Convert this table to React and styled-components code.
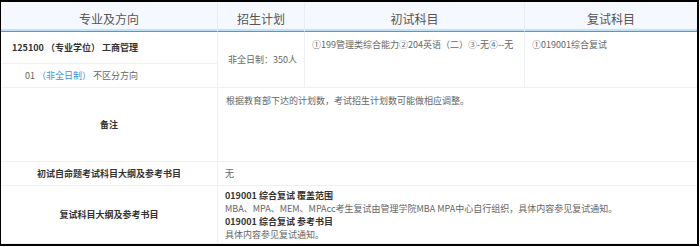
import React from "react";
import styled, { createGlobalStyle } from "styled-components";

const Global = createGlobalStyle`
  html, body { margin: 0; padding: 0; background: #fff; }
  body { font-family: "Noto Sans CJK SC", "Noto Sans", sans-serif; }
`;

const Frame = styled.div`
  box-sizing: border-box;
  width: 699px;
  height: 246px;
  border: 2px solid #000;
  border-left-width: 1px;
  border-top-width: 2px;
  background: #fff;
  overflow: hidden;
`;

const Grid = styled.div`
  display: grid;
  grid-template-columns: 217px 87px 220px 172px;
  grid-template-rows: 30px 32px 24px 74px 24px 58px;
`;

const Head = styled.div`
  grid-column: ${(p) => p.$col};
  grid-row: 1;
  box-sizing: border-box;
  background: #f5f9ff;
  border-bottom: 1px solid #2ea7e0;
  box-shadow: inset 0 -2px 0 #bfe3f6;
  border-right: ${(p) => (p.$last ? "none" : "1px solid #e6eef6")};
  display: flex;
  align-items: center;
  justify-content: center;
  padding-top: 3px;
  font-size: 12px;
  color: #555;
`;

const Cell = styled.div`
  grid-column: ${(p) => p.$col};
  grid-row: ${(p) => p.$row};
  box-sizing: border-box;
  border-right: ${(p) => (p.$last ? "none" : "1px solid #eef1f4")};
  border-bottom: 1px solid #eef1f4;
  display: flex;
  flex-direction: column;
  justify-content: ${(p) => p.$v || "center"};
  align-items: ${(p) => (p.$center ? "center" : "flex-start")};
  padding: ${(p) => p.$pad || "0 7px"};
  font-size: 9px;
  line-height: 13px;
  color: #666;
  white-space: nowrap;
`;

const Strong = styled.span`
  font-weight: bold;
  color: #333;
`;

const Blue = styled.span`
  color: #3b8fd9;
`;

export default function App() {
  return (
    <>
      <Global />
      <Frame>
        <Grid>
          <Head $col="1">专业及方向</Head>
          <Head $col="2">招生计划</Head>
          <Head $col="3">初试科目</Head>
          <Head $col="4" $last>复试科目</Head>

          <Cell $col="1" $row="2" $pad="0 11px">
            <Strong>125100 （专业学位） 工商管理</Strong>
          </Cell>
          <Cell $col="1" $row="3" $pad="0 24px">
            <span>
              01 <Blue>（非全日制）</Blue> 不区分方向
            </span>
          </Cell>
          <Cell $col="2" $row="2 / 4" $pad="0 10px">
            非全日制：350人
          </Cell>
          <Cell $col="3" $row="2 / 4" $v="flex-start" $pad="6px 7px">
            ①199管理类综合能力②204英语（二）③-无④--无
          </Cell>
          <Cell $col="4" $row="2 / 4" $v="flex-start" $pad="6px 7px" $last>
            ①019001综合复试
          </Cell>

          <Cell $col="1" $row="4" $center>
            <Strong>备注</Strong>
          </Cell>
          <Cell $col="2 / 5" $row="4" $v="flex-start" $pad="6px 8px" $last>
            根据教育部下达的计划数，考试招生计划数可能做相应调整。
          </Cell>

          <Cell $col="1" $row="5" $center>
            <Strong>初试自命题考试科目大纲及参考书目</Strong>
          </Cell>
          <Cell $col="2 / 5" $row="5" $last>
            无
          </Cell>

          <Cell $col="1" $row="6" $center>
            <Strong>复试科目大纲及参考书目</Strong>
          </Cell>
          <Cell $col="2 / 5" $row="6" $v="flex-start" $pad="3px 7px" $last>
            <Strong>019001 综合复试 覆盖范围</Strong>
            <span>MBA、MPA、MEM、MPAcc考生复试由管理学院MBA MPA中心自行组织，具体内容参见复试通知。</span>
            <Strong>019001 综合复试 参考书目</Strong>
            <span>具体内容参见复试通知。</span>
          </Cell>
        </Grid>
      </Frame>
    </>
  );
}
